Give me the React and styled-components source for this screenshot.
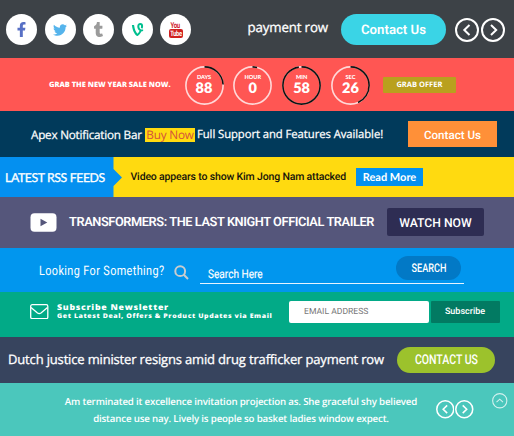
import React from "react";
import styled, { createGlobalStyle } from "styled-components";
import { FaFacebookF, FaTwitter, FaTumblr, FaVine } from "react-icons/fa";

const GlobalStyle = createGlobalStyle`
  * { box-sizing: border-box; }
  body { margin: 0; text-rendering: geometricPrecision; }
`;

const Page = styled.main`
  width: 514px;
  height: 436px;
  overflow: hidden;
  color: #fff;
  font-family: "Open Sans", sans-serif;
`;

const Bar = styled.section`
  display: flex;
  align-items: flex-start;
  height: ${(p) => p.$h}px;
  background: ${(p) => p.$bg};
`;

/* A single line of copy: $x is the gap before it, $w its measure, $y its top. */
const Label = styled.span`
  display: block;
  flex: none;
  white-space: nowrap;
  margin: ${(p) => p.$y || 0}px 0 0 ${(p) => p.$x || 0}px;
  width: ${(p) => (p.$w ? `${p.$w}px` : "auto")};
  font-family: ${(p) => p.$font || '"Open Sans"'}, sans-serif;
  font-size: ${(p) => p.$size}px;
  line-height: ${(p) => p.$lh || 20}px;
  font-weight: ${(p) => p.$weight || 400};
  letter-spacing: ${(p) => p.$ls || 0}px;
  color: ${(p) => p.$color || "inherit"};
  -webkit-text-stroke: ${(p) => p.$stroke || 0}px currentColor;
`;

const Button = styled.button`
  display: flex;
  flex: none;
  align-items: center;
  justify-content: center;
  white-space: nowrap;
  border: 0;
  padding: ${(p) => p.$pt || 0}px 0 0;
  margin: ${(p) => p.$y}px 0 0 ${(p) => p.$x}px;
  width: ${(p) => p.$w}px;
  height: ${(p) => p.$h}px;
  border-radius: ${(p) => p.$r || 0}px;
  background: ${(p) => p.$bg};
  color: #fff;
  font-family: ${(p) => p.$font || "Roboto"}, sans-serif;
  font-size: ${(p) => p.$size}px;
  font-weight: ${(p) => p.$weight || 500};
  letter-spacing: ${(p) => p.$ls || 0}px;
  text-rendering: geometricPrecision;
`;

const Condensed = styled.span`
  display: block;
  transform: scaleX(${(p) => p.$scale});
  transform-origin: ${(p) => p.$origin || "center"};
`;

const Socials = styled.nav`
  display: flex;
  gap: 7.5px;
  margin: 14px 0 0 6px;
  width: 241.5px;
`;

const Social = styled.a`
  display: flex;
  align-items: center;
  justify-content: center;
  width: 31px;
  height: 31px;
  border-radius: 50%;
  background: #fff;
  color: ${(p) => p.$color};
  font-size: ${(p) => p.$size}px;
`;

const YouTubeBadge = styled.span`
  display: flex;
  flex-direction: column;
  align-items: center;
  color: #d0201f;
  font: 700 8px/7px "Roboto", sans-serif;
  letter-spacing: -0.4px;
`;

const YouTubeTube = styled.span`
  width: 14px;
  height: 9px;
  border-radius: 2px;
  background: #d0201f;
  color: #fff;
  font-size: 7.5px;
  line-height: 9.5px;
  text-align: center;
`;

const Squeeze = styled.span`
  display: block;
  transform: scaleX(0.75);
  margin: 0 -3px;
`;

const Arrows = styled.div`
  display: flex;
  flex: none;
  gap: ${(p) => p.$gap}px;
  margin: ${(p) => p.$y}px 0 0 ${(p) => p.$x}px;
`;

const Icon = styled.svg`
  display: block;
  flex: none;
  margin: ${(p) => p.$y || 0}px 0 0 ${(p) => p.$x || 0}px;
  fill: none;
`;

const Timers = styled.div`
  display: flex;
  gap: 9.8px;
  margin: 7.5px 0 0 12.5px;
`;

const Timer = styled.div`
  display: grid;
  width: 39px;
  height: 39px;
  > * { grid-area: 1 / 1; }
`;

const TimerText = styled.div`
  display: flex;
  flex-direction: column;
  align-items: center;
  padding-top: 9px;
  font-family: Lato, sans-serif;
`;

const Unit = styled.span`
  font-size: 5.6px;
  font-weight: 900;
  line-height: 6px;
`;

const Count = styled.span`
  font-size: 14.5px;
  font-weight: 800;
  line-height: 15px;
`;

const Highlight = styled.mark`
  display: block;
  margin: 17px 0 0 3px;
  width: 50px;
  height: 14px;
  background: #ffdb10;
  color: #d4523c;
  font-size: 11.8px;
  letter-spacing: -0.2px;
  line-height: 14px;
  text-align: center;
  white-space: nowrap;
`;

const FeedTag = styled.div`
  flex: none;
  width: 122px;
  height: 40px;
  padding-left: 5px;
  background: #0490f0;
  clip-path: polygon(0 0, 113.5px 0, 113.5px 12px, 122px 20.5px, 113.5px 29px, 113.5px 100%, 0 100%);
  font: 400 12.3px/41px Lato, sans-serif;
  letter-spacing: -0.4px;
  -webkit-text-stroke: 0.3px #fff;
  white-space: nowrap;
`;

const SearchField = styled.div`
  display: flex;
  flex: none;
  width: 264px;
  height: 36px;
  margin-left: 11px;
  border-bottom: 1px solid #e6f4ff;
`;

const Stack = styled.div`
  display: flex;
  flex-direction: column;
  flex: none;
  width: 224px;
  margin: 11.5px 0 0 8.5px;
`;

const EmailField = styled.div`
  flex: none;
  width: 140px;
  height: 22px;
  margin: 8.5px 0 0 8px;
  padding-left: 15px;
  border-radius: 2px;
  background: #fff;
  color: #777;
  font: 400 8.6px/23px Roboto, sans-serif;
`;

const Copy = styled.p`
  flex: none;
  width: 364px;
  margin: 10px 0 0 59px;
  text-align: center;
  white-space: nowrap;
  font-size: 9.7px;
  font-weight: 600;
  letter-spacing: -0.16px;
  line-height: 17px;
`;

function Chevron({ size, dir, weight = 2, opacity = 1, x, y }) {
  const paths = {
    left: "M14.5 7 L9.3 12 L14.5 17",
    right: "M10 7 L15.2 12 L10 17",
    up: "M7 14 L12 9.5 L17 14",
  };
  return (
    <Icon $x={x} $y={y} width={size} height={size} viewBox="0 0 24 24" stroke="#fff" strokeWidth={weight} opacity={opacity}>
      <circle cx="12" cy="12" r="11" />
      <path d={paths[dir]} />
    </Icon>
  );
}

function Countdown({ unit, value, part }) {
  const length = 2 * Math.PI * 18.6;
  return (
    <Timer>
      <Icon width="39" height="39" viewBox="0 0 39 39" strokeWidth="1.6">
        <circle cx="19.5" cy="19.5" r="18.6" stroke="#ffd8d8" />
        <circle cx="19.5" cy="19.5" r="18.6" stroke="#111" strokeDasharray={`${length * part} ${length}`} transform="rotate(-90 19.5 19.5)" />
      </Icon>
      <TimerText>
        <Unit>{unit}</Unit>
        <Count>{value}</Count>
      </TimerText>
    </Timer>
  );
}

export default function App() {
  return (
    <Page>
      <GlobalStyle />
      <Bar $h={58} $bg="#3d4247">
        <Socials>
          <Social $color="#5870c5" $size={15}><FaFacebookF /></Social>
          <Social $color="#55b4ec" $size={14}><FaTwitter /></Social>
          <Social $color="#9b9b9b" $size={15}><FaTumblr /></Social>
          <Social $color="#00bf8f" $size={15}><FaVine /></Social>
          <Social>
            <YouTubeBadge>
              <Squeeze>You</Squeeze>
              <YouTubeTube><Squeeze>Tube</Squeeze></YouTubeTube>
            </YouTubeBadge>
          </Social>
        </Socials>
        <Label $w={93.5} $y={17} $size={13.3} $stroke={0.3} $ls={-0.15}>payment row</Label>
        <Button $w={105} $h={31} $y={14} $x={0} $r={16} $bg="#3ad4e6" $size={13.2} $weight={600} $pt={2}>Contact Us</Button>
        <Arrows $gap={2} $x={9} $y={18}>
          <Chevron size={24} dir="left" />
          <Chevron size={24} dir="right" />
        </Arrows>
      </Bar>

      <Bar $h={53} $bg="#ff5653">
        <Label $x={49} $w={123} $y={17} $size={7.4} $weight={800}>GRAB THE NEW YEAR SALE NOW.</Label>
        <Timers>
          <Countdown unit="DAYS" value="88" part={0.24} />
          <Countdown unit="HOUR" value="0" part={0.04} />
          <Countdown unit="MIN" value="58" part={0.97} />
          <Countdown unit="SEC" value="26" part={0.43} />
        </Timers>
        <Button $w={73} $h={16} $x={13} $y={19} $r={1} $bg="#b9a01e" $font="Open Sans" $size={7.5} $weight={700}>GRAB OFFER</Button>
      </Bar>

      <Bar $h={46} $bg="#013a5b">
        <Label $x={31} $w={111} $y={14} $size={11.7} $stroke={0.25} $ls={-0.22}>Apex Notification Bar</Label>
        <Highlight>Buy Now</Highlight>
        <Label $x={2} $w={188} $y={14} $size={11.3} $stroke={0.25} $ls={-0.07}>Full Support and Features Available!</Label>
        <Button $w={89} $h={26} $x={23} $y={10} $bg="#ff9038" $size={11.6} $pt={2}>Contact Us</Button>
      </Bar>

      <Bar $h={40} $bg="#ffda10">
        <FeedTag>LATEST RSS FEEDS</FeedTag>
        <Label $x={8.5} $w={216} $y={10} $size={10.5} $weight={500} $font="Roboto" $color="#17150a" $ls={-0.16}>Video appears to show Kim Jong Nam attacked</Label>
        <Button $w={67} $h={18} $x={9.5} $y={11} $bg="#0490f0" $font="Lato" $size={11} $weight={700}>Read More</Button>
      </Bar>

      <Bar $h={51} $bg="#55567b">
        <Icon $x={30} $y={16} width="27" height="19" viewBox="0 0 27 19">
          <rect x="0.5" y="0.3" width="26" height="18.5" rx="4" fill="#fff" />
          <path d="M10.5 5.8 L17.3 9.5 L10.5 13.2 Z" fill="#55567b" />
        </Icon>
        <Label $x={12} $w={306.5} $y={16} $size={12.8} $weight={600} $font="Roboto" $ls={-0.42}>TRANSFORMERS: THE LAST KNIGHT OFFICIAL TRAILER</Label>
        <Button $w={97} $h={28} $x={11.5} $y={11} $r={2} $bg="#2e2d53" $size={12.2} $pt={2}>WATCH NOW</Button>
      </Bar>

      <Bar $h={44} $bg="#0196ee">
        <Label $x={39} $w={125} $y={14} $size={13.2} $font="Roboto" $ls={0.5}>
          <Condensed $scale={0.82} $origin="left">Looking For Something?</Condensed>
        </Label>
        <Icon $x={10} $y={17} width="15" height="15" viewBox="0 0 15 15" stroke="#c9ccce" strokeWidth="2">
          <circle cx="6.2" cy="6.2" r="4.9" />
          <path d="M9.8 9.8 L14 14" />
        </Icon>
        <SearchField>
          <Label $x={8} $w={60} $y={16} $size={12} $font="Roboto" $stroke={0.15}>
            <Condensed $scale={0.84} $origin="left">Search Here</Condensed>
          </Label>
          <Button $w={65} $h={24} $x={128} $y={8} $r={12} $bg="#0279c6" $size={12} $weight={500}>
            <Condensed $scale={0.76}>SEARCH</Condensed>
          </Button>
        </SearchField>
      </Bar>

      <Bar $h={45} $bg="#02aa87">
        <Icon $x={30} $y={11.5} width="18.5" height="15.5" viewBox="0 0 18.5 15.5" stroke="#fff" strokeWidth="1.3">
          <rect x="0.7" y="0.7" width="17.1" height="14" rx="1.5" />
          <path d="M1 3.5 L7.5 9 Q9.2 10.2 11 9 L17.5 3.5" />
        </Icon>
        <Stack>
          <Label $size={8} $lh={8} $weight={800} $ls={0.65}>
            <Condensed $scale={1.1} $origin="left">Subscribe Newsletter</Condensed>
          </Label>
          <Label $size={6.4} $lh={7} $weight={800} $ls={0.52}>
            <Condensed $scale={1.1} $origin="left">Get Latest Deal, Offers &amp; Product Updates via Email</Condensed>
          </Label>
        </Stack>
        <EmailField>EMAIL ADDRESS</EmailField>
        <Button $w={69} $h={22} $x={1.5} $y={8.5} $r={1} $bg="#027a62" $size={9} $pt={1}>Subscribe</Button>
      </Bar>

      <Bar $h={46} $bg="#37445e">
        <Label $x={8} $w={377} $y={12} $size={13} $stroke={0.3} $ls={-0.16}>Dutch justice minister resigns amid drug trafficker payment row</Label>
        <Button $w={98} $h={26} $x={12} $y={10} $r={13} $bg="#9cc22c" $size={13.5} $weight={500}>
          <Condensed $scale={0.78}>CONTACT US</Condensed>
        </Button>
      </Bar>

      <Bar $h={53} $bg="#4bc7bc">
        <Copy>
          Am terminated it excellence invitation projection as. She graceful shy believed
          <br />
          distance use nay. Lively is people so basket ladies window expect.
        </Copy>
        <Arrows $gap={1} $x={12.5} $y={17}>
          <Chevron size={18.5} dir="left" />
          <Chevron size={18.5} dir="right" />
        </Arrows>
        <Chevron size={15.5} dir="up" weight={1.7} opacity={0.75} x={18.5} y={10} />
      </Bar>
    </Page>
  );
}
